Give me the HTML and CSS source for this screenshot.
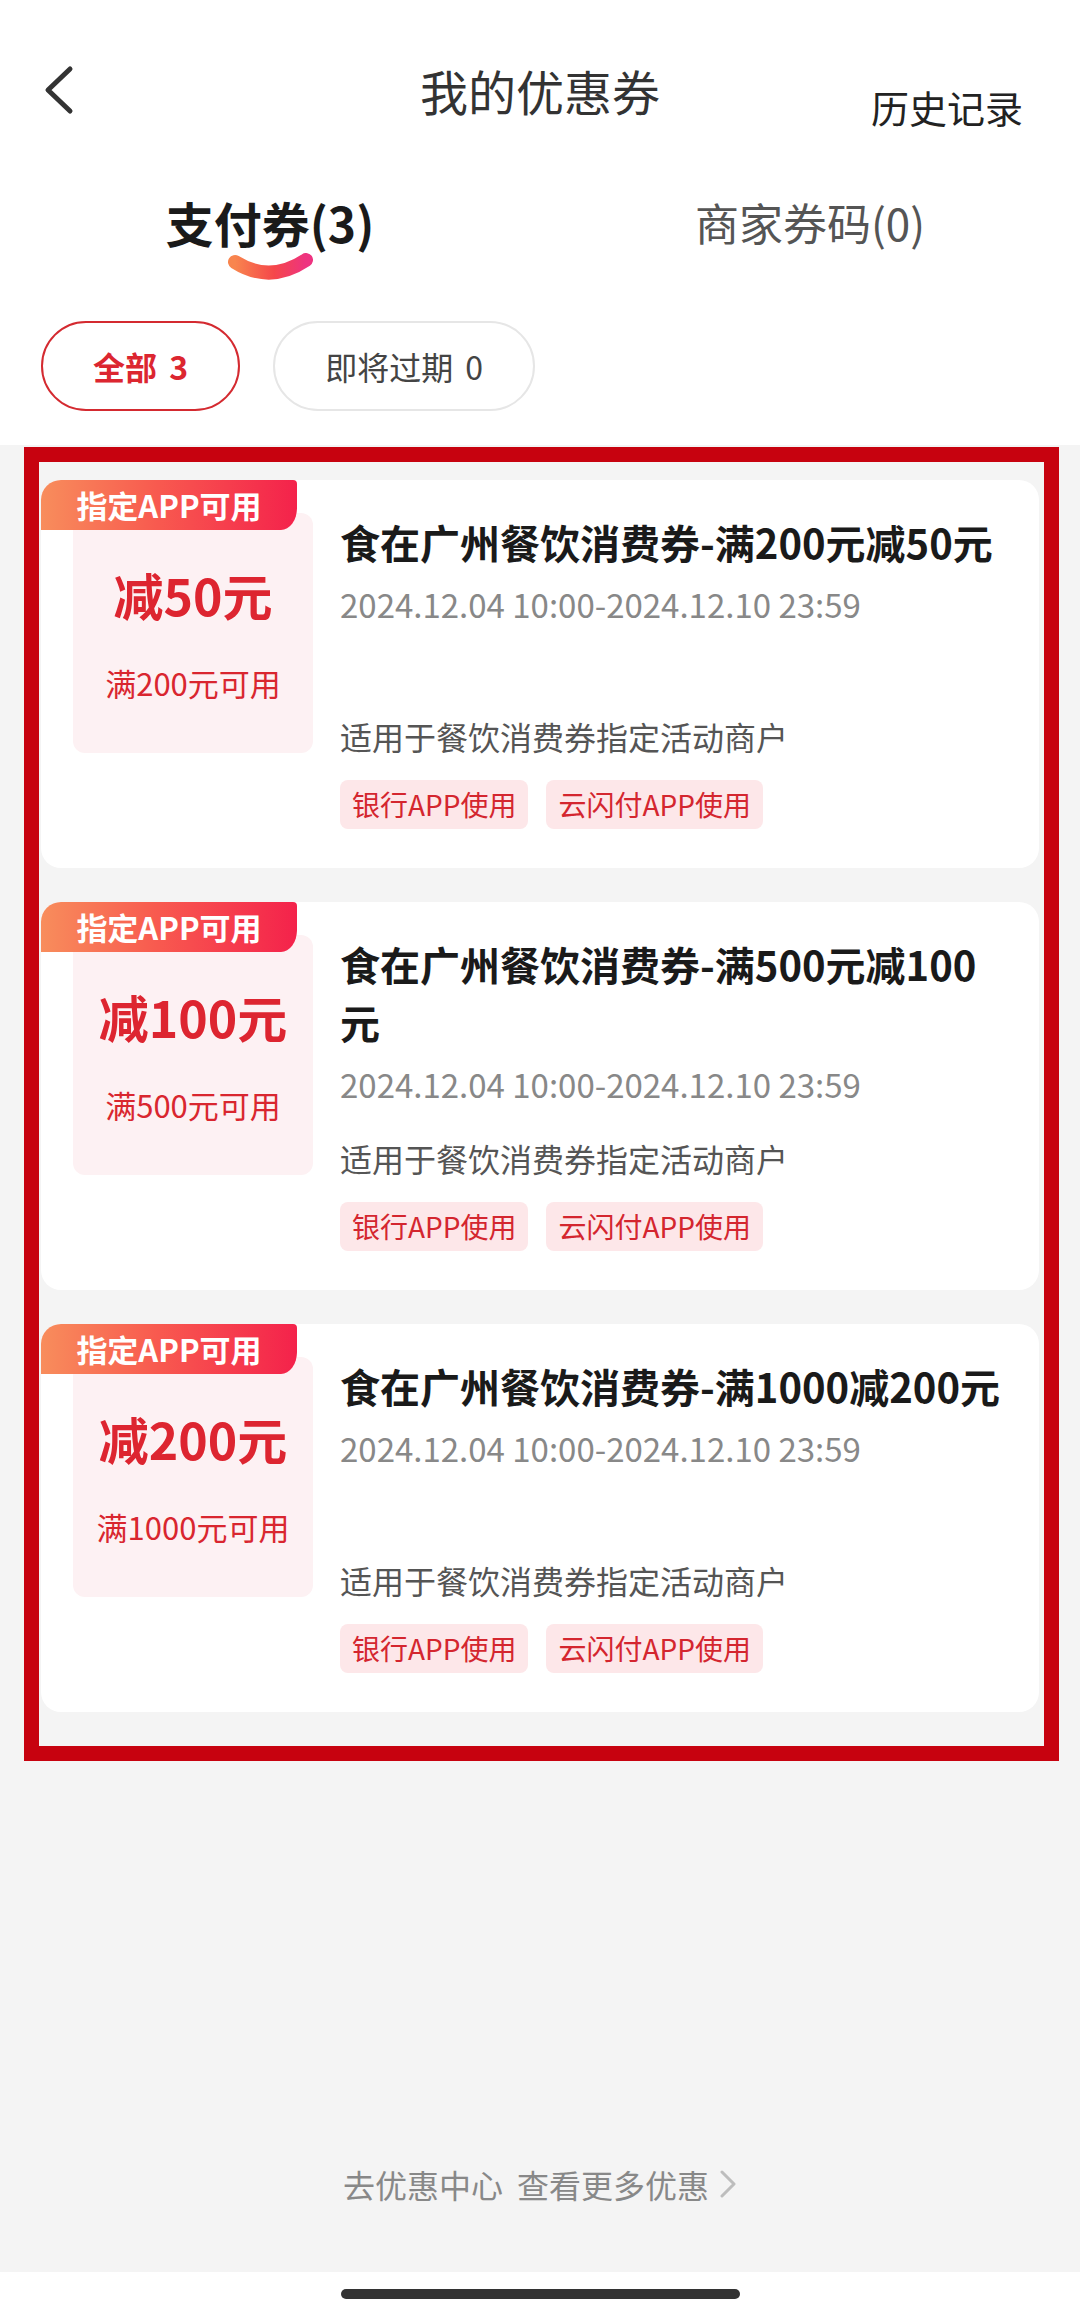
FILE: index.html
```html
<!DOCTYPE html>
<html lang="zh-CN">
<head>
<meta charset="utf-8">
<title>我的优惠券</title>
<link rel="stylesheet" href="styles.css">
</head>
<body>
<div class="screen">
  <header class="navbar">
    <div class="nav-left">
      <svg class="back" width="32" height="50" viewBox="0 0 32 50"><path d="M26 4 L4 25 L26 46" fill="none" stroke="#333" stroke-width="5" stroke-linecap="round" stroke-linejoin="round"/></svg>
    </div>
    <h1 class="nav-title">我的优惠券</h1>
    <div class="nav-right"><span class="history">历史记录</span></div>
  </header>

  <div class="tabs">
    <div class="tab tab-active">
      <span class="tab-label">支付券(3)</span>
      <svg class="swoosh" width="86" height="27" viewBox="0 0 86 27">
        <defs>
          <linearGradient id="sw" x1="0" y1="0" x2="1" y2="0">
            <stop offset="0" stop-color="#f8854e"/>
            <stop offset="0.55" stop-color="#f5474a"/>
            <stop offset="1" stop-color="#ee3380"/>
          </linearGradient>
        </defs>
        <path d="M8 9 Q43 31 79 7" fill="none" stroke="url(#sw)" stroke-width="14" stroke-linecap="round"/>
      </svg>
    </div>
    <div class="tab">
      <span class="tab-label">商家券码(0)</span>
    </div>
  </div>

  <div class="filters">
    <span class="chip chip-active">全部 3</span>
    <span class="chip">即将过期 0</span>
  </div>

  <main class="content">
    <div class="list">
      <div class="card">
        <span class="badge">指定APP可用</span>
        <div class="face">
          <div class="face-amount">减50元</div>
          <div class="face-cond">满200元可用</div>
        </div>
        <div class="info">
          <div class="info-main">
            <div class="info-top">
              <div class="title">食在广州餐饮消费券-满200元减50元</div>
              <div class="date">2024.12.04 10:00-2024.12.10 23:59</div>
            </div>
            <div class="scope">适用于餐饮消费券指定活动商户</div>
          </div>
          <div class="tags">
            <span class="tag">银行APP使用</span>
            <span class="tag">云闪付APP使用</span>
          </div>
        </div>
      </div>

      <div class="card">
        <span class="badge">指定APP可用</span>
        <div class="face">
          <div class="face-amount">减100元</div>
          <div class="face-cond">满500元可用</div>
        </div>
        <div class="info">
          <div class="info-main">
            <div class="info-top">
              <div class="title">食在广州餐饮消费券-满500元减100元</div>
              <div class="date">2024.12.04 10:00-2024.12.10 23:59</div>
            </div>
            <div class="scope">适用于餐饮消费券指定活动商户</div>
          </div>
          <div class="tags">
            <span class="tag">银行APP使用</span>
            <span class="tag">云闪付APP使用</span>
          </div>
        </div>
      </div>

      <div class="card">
        <span class="badge">指定APP可用</span>
        <div class="face">
          <div class="face-amount">减200元</div>
          <div class="face-cond">满1000元可用</div>
        </div>
        <div class="info">
          <div class="info-main">
            <div class="info-top">
              <div class="title">食在广州餐饮消费券-满1000减200元</div>
              <div class="date">2024.12.04 10:00-2024.12.10 23:59</div>
            </div>
            <div class="scope">适用于餐饮消费券指定活动商户</div>
          </div>
          <div class="tags">
            <span class="tag">银行APP使用</span>
            <span class="tag">云闪付APP使用</span>
          </div>
        </div>
      </div>
    </div>

    <div class="more">
      <span>去优惠中心</span><span class="more-gap">查看更多优惠</span>
      <svg class="more-arrow" width="18" height="28" viewBox="0 0 18 28"><path d="M3 2 L15 14 L3 26" fill="none" stroke="#bdbdbd" stroke-width="3" stroke-linecap="round" stroke-linejoin="round"/></svg>
    </div>
  </main>

  <div class="home-bar"><span class="indicator"></span></div>

  <div class="annotation"></div>
</div>
</body>
</html>
```

FILE: styles.css
```css
* { box-sizing: border-box; }

html, body {
  margin: 0;
  padding: 0;
  background: #ffffff;
}

body {
  font-family: "Noto Sans CJK SC", "Noto Sans", sans-serif;
  color: #222;
}

.screen {
  position: relative;
  width: 1080px;
  height: 2316px;
  overflow: hidden;
  background: #ffffff;
}

/* ---------- nav bar ---------- */
.navbar {
  display: grid;
  grid-template-columns: 1fr auto 1fr;
  align-items: center;
  height: 140px;
  padding-top: 40px;
}

.nav-left {
  padding-left: 44px;
  display: flex;
  align-items: center;
}

.back { display: block; }

.nav-title {
  margin: 0;
  font-size: 48px;
  font-weight: 400;
  line-height: 100px;
  color: #333;
}

.nav-right {
  display: flex;
  justify-content: flex-end;
  padding-right: 57px;
}

.history {
  margin-top: 34px;
  font-size: 38px;
  line-height: 50px;
  color: #222;
}

/* ---------- tabs ---------- */
.tabs {
  display: flex;
  padding-top: 50px;
  height: 140px;
}

.tab {
  flex: 1;
  display: flex;
  flex-direction: column;
  align-items: center;
}

.tab-label {
  font-size: 44px;
  line-height: 64px;
  color: #555;
}

.tab-active .tab-label {
  font-size: 48px;
  font-weight: 700;
  color: #1a1a1a;
}

.swoosh {
  display: block;
  margin-top: -1px;
}

/* ---------- filter chips ---------- */
.filters {
  display: flex;
  gap: 33px;
  padding: 41px 41px 34px;
}

.chip {
  height: 90px;
  padding: 0 50px;
  border: 2px solid #e6e6e6;
  border-radius: 45px;
  font-size: 32px;
  line-height: 86px;
  word-spacing: 5px;
  color: #444;
  white-space: nowrap;
}

.chip-active {
  border-color: #d42a30;
  color: #dc2630;
  font-weight: 700;
}

/* ---------- content ---------- */
.content {
  height: 1827px;
  background: #f4f4f4;
  display: flex;
  flex-direction: column;
}

.list {
  display: flex;
  flex-direction: column;
  gap: 34px;
  padding: 35px 41px 0;
}

.card {
  position: relative;
  display: flex;
  background: #ffffff;
  border-radius: 20px;
  padding: 33px 37px 39px 32px;
}

.badge {
  position: absolute;
  top: 0;
  left: 0;
  width: 256px;
  height: 50px;
  border-radius: 20px 4px 16px 0 / 20px 4px 22px 0;
  background: linear-gradient(90deg, #f88d5c 0%, #f85a4f 45%, #f4224b 100%);
  color: #ffffff;
  font-size: 31px;
  font-weight: 700;
  line-height: 50px;
  text-align: center;
  white-space: nowrap;
}

.face {
  flex: none;
  width: 240px;
  height: 240px;
  background: #fdf1f3;
  border-radius: 12px;
  display: flex;
  flex-direction: column;
  align-items: center;
  justify-content: center;
  color: #dd2530;
}

.face-amount {
  font-size: 50px;
  font-weight: 700;
  line-height: 60px;
  white-space: nowrap;
}

.face-cond {
  margin-top: 39px;
  font-size: 31px;
  line-height: 40px;
  color: #d9262f;
  white-space: nowrap;
}

.info {
  flex: 1;
  min-width: 0;
  margin-left: 27px;
}

.info-main {
  min-height: 240px;
  display: flex;
  flex-direction: column;
  justify-content: space-between;
}

.title {
  font-size: 40px;
  font-weight: 700;
  line-height: 58px;
  color: #1a1a1a;
}

.date {
  margin-top: 10px;
  font-size: 33px;
  line-height: 46px;
  color: #888888;
  white-space: nowrap;
}

.scope {
  font-size: 32px;
  line-height: 34px;
  color: #555555;
}

.tags {
  display: flex;
  gap: 18px;
  margin-top: 27px;
}

.tag {
  height: 49px;
  padding: 0 12px;
  border-radius: 8px;
  background: #fde7e9;
  color: #d4262f;
  font-size: 28px;
  line-height: 49px;
  white-space: nowrap;
}

/* ---------- footer link ---------- */
.more {
  margin-top: auto;
  display: flex;
  align-items: center;
  justify-content: center;
  padding-bottom: 66px;
  font-size: 32px;
  line-height: 44px;
  color: #888888;
}

.more-gap { margin-left: 14px; }

.more-arrow {
  display: block;
  margin-left: 10px;
}

/* ---------- home indicator ---------- */
.home-bar {
  height: 44px;
  display: flex;
  justify-content: center;
  padding-top: 17px;
}

.indicator {
  display: block;
  width: 399px;
  height: 10px;
  border-radius: 5px;
  background: #333333;
}

/* ---------- red annotation frame (overlay) ---------- */
.annotation {
  position: absolute;
  left: 24px;
  top: 447px;
  width: 1035px;
  height: 1314px;
  border: 15px solid #c7020f;
  pointer-events: none;
}
```
